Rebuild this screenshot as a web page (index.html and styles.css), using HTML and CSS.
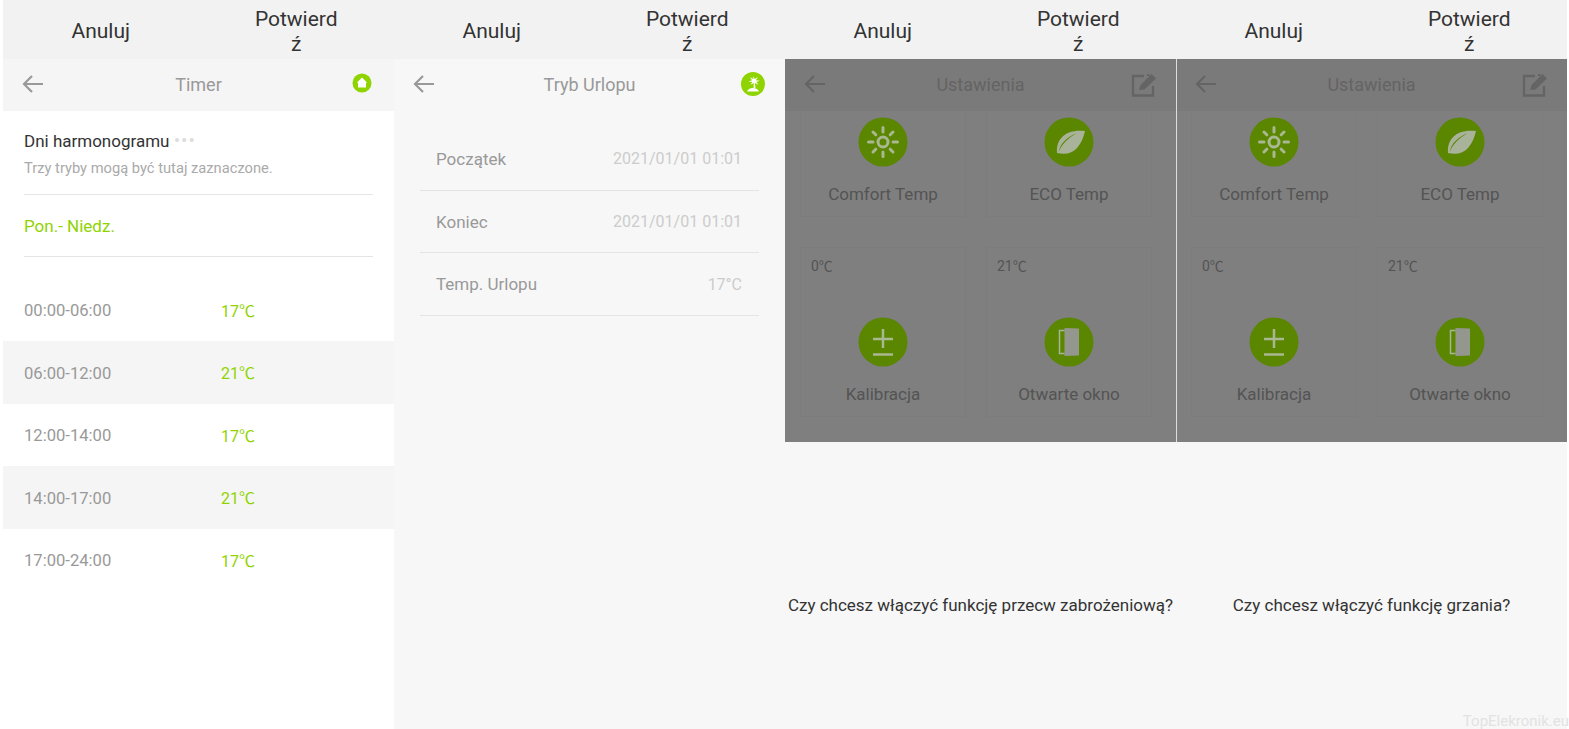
FILE: index.html
```html
<!DOCTYPE html>
<html lang="pl">
<head>
    <meta charset="UTF-8">
    <title>Termostat</title>
    <link rel="stylesheet" href="styles.css">
</head>
<body>
    <svg class="defs" width="0" height="0">
        <symbol id="back" viewBox="0 0 22 20">
            <path d="M21 10H2M10 2l-8 8 8 8" fill="none" stroke="currentColor" stroke-width="2.2"/>
        </symbol>
        <symbol id="edit" viewBox="0 0 26 24">
            <path d="M13 3H2v19.500h20V13" fill="none" stroke="currentColor" stroke-width="2.400"/>
            <path d="M16 2h2.500M22 16.500v2" fill="none" stroke="currentColor" stroke-width="2"/>
            <path d="M8 17l1.500-5L20.500 1l4.500 4.500L13.500 16.500z" fill="currentColor"/>
        </symbol>
        <symbol id="sun" viewBox="0 0 50 50">
            <circle cx="25" cy="25" r="24.500" fill="currentColor"/>
            <circle cx="25" cy="25" r="5" fill="none" stroke="#a9b890" stroke-width="3"/>
            <path d="M25 10.500v4.500M25 35v4.500M10.500 25H15M35 25h4.500M15 15l2.800 2.800M32.200 32.200L35 35M15 35l2.800-2.800M32.200 17.800L35 15" fill="none" stroke="#a9b890" stroke-width="3" stroke-linecap="round"/>
        </symbol>
        <symbol id="leaf" viewBox="0 0 50 50">
            <circle cx="25" cy="25" r="24.500" fill="currentColor"/>
            <path d="M13 36c-1-9 3-17 12-20.500 5-1.800 10-2 16-1.500-1.500 6-3.500 12-8 17-4.500 5-11 7-20 5zm1.500-.8c3-7.500 9-14 18-19-10 4-16 10-18 19z" fill="#a9b39a" fill-rule="evenodd"/>
        </symbol>
        <symbol id="plusminus" viewBox="0 0 50 50">
            <circle cx="25" cy="25" r="24.500" fill="currentColor"/>
            <path d="M25 12v19M15 22h20M15 37.500h20" fill="none" stroke="#a9b890" stroke-width="2.500"/>
        </symbol>
        <symbol id="door" viewBox="0 0 50 50">
            <circle cx="25" cy="25" r="24.500" fill="currentColor"/>
            <path d="M20.500 11L35 11.500v27L20.500 39z" fill="#93978e"/>
            <path d="M20.500 13.500h-5v23h5" fill="none" stroke="#a9b39a" stroke-width="1.500"/>
        </symbol>
    </svg>

    <div class="app">
        <!-- Timer -->
        <section class="panel panel-white">
            <div class="actions">
                <span class="action">Anuluj</span>
                <span class="action"><span class="confirm">Potwierdź</span></span>
            </div>
            <header class="topbar">
                <svg class="back"><use href="#back"/></svg>
                <span class="title">Timer</span>
                <svg class="home" viewBox="0 0 20 20">
                    <circle cx="10" cy="10" r="9.500" fill="#8fd400"/>
                    <path d="M10 4.500l5 5-1 .5v4.500H6V10l-1-.5z" fill="#fff"/>
                </svg>
            </header>
            <div class="schedule">
                <div class="schedule-head">
                    <div class="schedule-title">Dni harmonogramu <span class="dots">•••</span></div>
                    <div class="schedule-sub">Trzy tryby mogą być tutaj zaznaczone.</div>
                </div>
                <div class="days">Pon.- Niedz.</div>
            </div>
            <div class="slots">
                <div class="slot"><span class="slot-time">00:00-06:00</span><span class="slot-temp">17℃</span></div>
                <div class="slot slot-alt"><span class="slot-time">06:00-12:00</span><span class="slot-temp">21℃</span></div>
                <div class="slot"><span class="slot-time">12:00-14:00</span><span class="slot-temp">17℃</span></div>
                <div class="slot slot-alt"><span class="slot-time">14:00-17:00</span><span class="slot-temp">21℃</span></div>
                <div class="slot"><span class="slot-time">17:00-24:00</span><span class="slot-temp">17℃</span></div>
            </div>
        </section>

        <!-- Tryb urlopu -->
        <section class="panel">
            <div class="actions">
                <span class="action">Anuluj</span>
                <span class="action"><span class="confirm">Potwierdź</span></span>
            </div>
            <header class="topbar topbar-plain">
                <svg class="back"><use href="#back"/></svg>
                <span class="title">Tryb Urlopu</span>
                <svg class="palm" viewBox="0 0 24 24">
                    <circle cx="12" cy="12" r="12" fill="#8fd400"/>
                    <path d="M12.500 4l1 3 3.500-1.800-2.200 3 4 .5-3.500 1.300 2.200 2.700-3.600-1.700.6 5h-2l.3-5-3.300 1.700 1.900-2.700-3.900-.6 3.600-1.200-2.200-3 3.300 1.800z" fill="#fff"/>
                    <path d="M6 19.500c1-2.500 3.500-3.500 6-3.500s5 1 6 3.500z" fill="#fff"/>
                </svg>
            </header>
            <div class="holiday">
                <div class="holiday-row"><span>Początek</span><span class="holiday-value">2021/01/01 01:01</span></div>
                <div class="holiday-row"><span>Koniec</span><span class="holiday-value">2021/01/01 01:01</span></div>
                <div class="holiday-row"><span>Temp. Urlopu</span><span class="holiday-value">17°C</span></div>
            </div>
        </section>

        <!-- Ustawienia + pytanie -->
        <section class="panel">
            <div class="actions">
                <span class="action">Anuluj</span>
                <span class="action"><span class="confirm">Potwierdź</span></span>
            </div>
            <div class="dimmed">
                <header class="topbar">
                    <svg class="back"><use href="#back"/></svg>
                    <span class="title">Ustawienia</span>
                    <svg class="edit"><use href="#edit"/></svg>
                </header>
                <div class="cards">
                    <div class="card card-short">
                        <svg class="card-icon"><use href="#sun"/></svg>
                        <span class="card-label">Comfort Temp</span>
                    </div>
                    <div class="card card-short">
                        <svg class="card-icon"><use href="#leaf"/></svg>
                        <span class="card-label">ECO Temp</span>
                    </div>
                    <div class="card">
                        <span class="card-value">0℃</span>
                        <svg class="card-icon"><use href="#plusminus"/></svg>
                        <span class="card-label">Kalibracja</span>
                    </div>
                    <div class="card">
                        <span class="card-value">21℃</span>
                        <svg class="card-icon"><use href="#door"/></svg>
                        <span class="card-label">Otwarte okno</span>
                    </div>
                </div>
            </div>
            <p class="question">Czy chcesz włączyć funkcję przecw zabrożeniową?</p>
        </section>

        <section class="panel">
            <div class="actions">
                <span class="action">Anuluj</span>
                <span class="action"><span class="confirm">Potwierdź</span></span>
            </div>
            <div class="dimmed dimmed-split">
                <header class="topbar">
                    <svg class="back"><use href="#back"/></svg>
                    <span class="title">Ustawienia</span>
                    <svg class="edit"><use href="#edit"/></svg>
                </header>
                <div class="cards">
                    <div class="card card-short">
                        <svg class="card-icon"><use href="#sun"/></svg>
                        <span class="card-label">Comfort Temp</span>
                    </div>
                    <div class="card card-short">
                        <svg class="card-icon"><use href="#leaf"/></svg>
                        <span class="card-label">ECO Temp</span>
                    </div>
                    <div class="card">
                        <span class="card-value">0℃</span>
                        <svg class="card-icon"><use href="#plusminus"/></svg>
                        <span class="card-label">Kalibracja</span>
                    </div>
                    <div class="card">
                        <span class="card-value">21℃</span>
                        <svg class="card-icon"><use href="#door"/></svg>
                        <span class="card-label">Otwarte okno</span>
                    </div>
                </div>
            </div>
            <p class="question">Czy chcesz włączyć funkcję grzania?</p>
        </section>
    </div>

    <span class="watermark">TopElekronik.eu</span>
</body>
</html>
```

FILE: styles.css
```css
* {
    box-sizing: border-box;
}
body {
    margin: 0;
    background: #fff;
    font-family: Roboto, "Noto Sans CJK SC", sans-serif;
    overflow: hidden;
}
.defs {
    position: absolute;
}
.app {
    display: flex;
    height: 729px;
    padding-left: 3px;
}
.panel {
    width: 391px;
    background: #f7f7f7;
}
.panel-white {
    background: #fff;
}

/* top buttons */
.actions {
    display: flex;
    height: 59px;
    padding-top: 4px;
    background: #f2f2f2;
    color: #333;
    font-size: 21px;
    line-height: 25px;
    text-align: center;
}
.action {
    flex: 1;
    display: flex;
    align-items: center;
    justify-content: center;
}
.confirm {
    width: 88px;
    word-break: break-all;
}

/* header bar */
.topbar {
    display: flex;
    align-items: center;
    justify-content: center;
    position: relative;
    height: 52px;
    padding-bottom: 2px;
    background: #f5f5f5;
    color: #999;
}
.topbar-plain {
    background: transparent;
}
.title {
    font-size: 18px;
}
.back {
    position: absolute;
    left: 19px;
    top: 15px;
    width: 22px;
    height: 20px;
}
.home {
    position: absolute;
    right: 22px;
    top: 14px;
    width: 20px;
    height: 20px;
}
.palm {
    position: absolute;
    right: 20px;
    top: 13px;
    width: 24px;
    height: 24px;
}
.edit {
    position: absolute;
    right: 19px;
    top: 14px;
    width: 26px;
    height: 24px;
}

/* timer */
.schedule {
    margin: 0 21px;
}
.schedule-head {
    height: 84px;
    padding-top: 20px;
    border-bottom: 1px solid #e4e4e4;
}
.schedule-title {
    font-size: 17px;
    line-height: 20px;
    color: #333;
}
.dots {
    color: #ddd;
    font-size: 19px;
    line-height: 10px;
    letter-spacing: 1px;
}
.schedule-sub {
    margin-top: 8px;
    font-size: 14.7px;
    line-height: 18px;
    color: #aaa;
}
.days {
    height: 62px;
    line-height: 62px;
    font-size: 17px;
    color: #8fd400;
    border-bottom: 1px solid #e4e4e4;
}
.slots {
    margin-top: 21.5px;
}
.slot {
    display: flex;
    align-items: center;
    height: 62.5px;
    padding-left: 21px;
    font-size: 16.6px;
}
.slot-alt {
    background: #f5f5f5;
}
.slot-time {
    width: 197px;
    padding-top: 2px;
    color: #999;
}
.slot-temp {
    font-size: 16px;
    color: #8fd400;
}

/* holiday mode */
.holiday {
    margin: 17px 26px 0;
}
.holiday-row {
    display: flex;
    justify-content: space-between;
    align-items: center;
    height: 62.7px;
    padding: 0 17px 0 16px;
    border-bottom: 1px solid #e4e4e4;
    font-size: 17px;
    color: #999;
}
.holiday-value {
    font-size: 16px;
    color: #ccc;
}

/* settings behind the dialog */
.dimmed {
    position: relative;
    height: 383px;
    overflow: hidden;
}
.dimmed::after {
    content: "";
    position: absolute;
    inset: 0;
    background: rgba(0, 0, 0, 0.5);
}
.dimmed-split::before {
    content: "";
    position: absolute;
    left: 0;
    top: 0;
    bottom: 0;
    width: 1px;
    background: #ddd;
    z-index: 2;
}
.dimmed .topbar {
    color: #c8c8c8;
}
.cards {
    display: grid;
    grid-template-columns: 166px 166px;
    grid-template-rows: 106px 170px;
    gap: 30px 20px;
    padding: 0 15px;
    background: #fff;
    height: 331px;
}
.card {
    display: flex;
    flex-direction: column;
    align-items: center;
    padding-top: 69px;
    position: relative;
    border: 1px solid #f8f8f8;
    background: #fff;
    color: #a8a8a8;
}
.card-short {
    padding-top: 6px;
    border-top: none;
}
.card-icon {
    position: relative;
    z-index: 1;
    width: 50px;
    height: 50px;
    color: #5a8600;
}
.card-label {
    margin-top: 16px;
    font-size: 17px;
    line-height: 22px;
}
.card-value {
    position: absolute;
    left: 10px;
    top: 7px;
    font-size: 14px;
}

.question {
    margin: 152px 0 0;
    font-size: 17px;
    line-height: 22px;
    color: #333;
    text-align: center;
    white-space: nowrap;
}

.watermark {
    position: absolute;
    right: 0;
    bottom: -1px;
    font-size: 15px;
    color: #e2e2e2;
}
```
